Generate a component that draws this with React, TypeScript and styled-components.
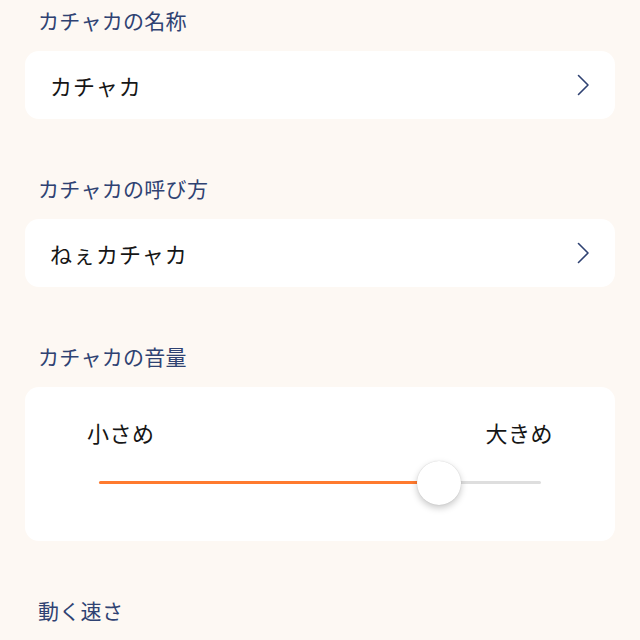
import styled, { createGlobalStyle } from 'styled-components'

const GlobalStyle = createGlobalStyle`
	html, body {
		margin: 0;
		padding: 0;
		background: #fdf8f3;
	}
	body {
		font-family: "Noto Sans CJK JP", "Noto Sans", sans-serif;
		-webkit-font-smoothing: antialiased;
	}
`

type Field = {
	label: string
	value: string
}

const fields: Field[] = [
	{ label: 'カチャカの名称', value: 'カチャカ' },
	{ label: 'カチャカの呼び方', value: 'ねぇカチャカ' },
]

const volume = 0.77

const Chevron = () => (
	<svg width="13" height="22" viewBox="0 0 13 22" fill="none">
		<path d="M1.5 1.5 L11 11 L1.5 20.5" stroke="#2f4272" strokeWidth="1.6" strokeLinecap="round" strokeLinejoin="round" />
	</svg>
)

const App = (): JSX.Element => (
	<Page>
		<GlobalStyle />
		{fields.map((f) => (
			<Section key={f.label}>
				<Label>{f.label}</Label>
				<RowCard>
					<Value>{f.value}</Value>
					<Chevron />
				</RowCard>
			</Section>
		))}
		<Section>
			<Label>カチャカの音量</Label>
			<SliderCard>
				<SliderLabels>
					<SliderText>小さめ</SliderText>
					<SliderText>大きめ</SliderText>
				</SliderLabels>
				<Track>
					<Fill style={{ width: `${volume * 100}%` }} />
					<Thumb style={{ left: `${volume * 100}%` }} />
				</Track>
			</SliderCard>
		</Section>
		<Section>
			<Label>動く速さ</Label>
		</Section>
	</Page>
)

export default App

const Page = styled.div`
	display: flex;
	flex-direction: column;
	gap: 54px;
	padding: 5px 25px 0;
	width: 640px;
	height: 640px;
	box-sizing: border-box;
	overflow: hidden;
`

const Section = styled.section`
	display: flex;
	flex-direction: column;
	gap: 16px;
`

const Label = styled.div`
	padding-left: 13px;
	font-size: 21px;
	line-height: 30px;
	color: #2f4272;
	letter-spacing: 0.3px;
`

const Card = styled.div`
	background: #ffffff;
	border-radius: 14px;
`

const RowCard = styled(Card)`
	display: flex;
	align-items: center;
	justify-content: space-between;
	height: 68px;
	padding: 0 25px 0 25px;
`

const Value = styled.span`
	font-size: 22px;
	color: #161616;
	letter-spacing: 1px;
`

const SliderCard = styled(Card)`
	display: flex;
	flex-direction: column;
	height: 154px;
	box-sizing: border-box;
	padding: 28px 62px 0;
`

const SliderLabels = styled.div`
	display: flex;
	justify-content: space-between;
`

const SliderText = styled.span`
	font-size: 22px;
	line-height: 34px;
	color: #161616;
	letter-spacing: 0.5px;
`

const Track = styled.div`
	position: relative;
	margin: 32px 12px 0;
	height: 3px;
	border-radius: 2px;
	background: #dedede;
`

const Fill = styled.div`
	height: 100%;
	border-radius: 2px;
	background: #ff7a2e;
`

const Thumb = styled.div`
	position: absolute;
	top: 50%;
	width: 44px;
	height: 44px;
	border-radius: 50%;
	background: #ffffff;
	transform: translate(-50%, -50%);
	box-shadow: 0 3px 7px rgba(0, 0, 0, 0.22), 0 0 1px rgba(0, 0, 0, 0.2);
`
